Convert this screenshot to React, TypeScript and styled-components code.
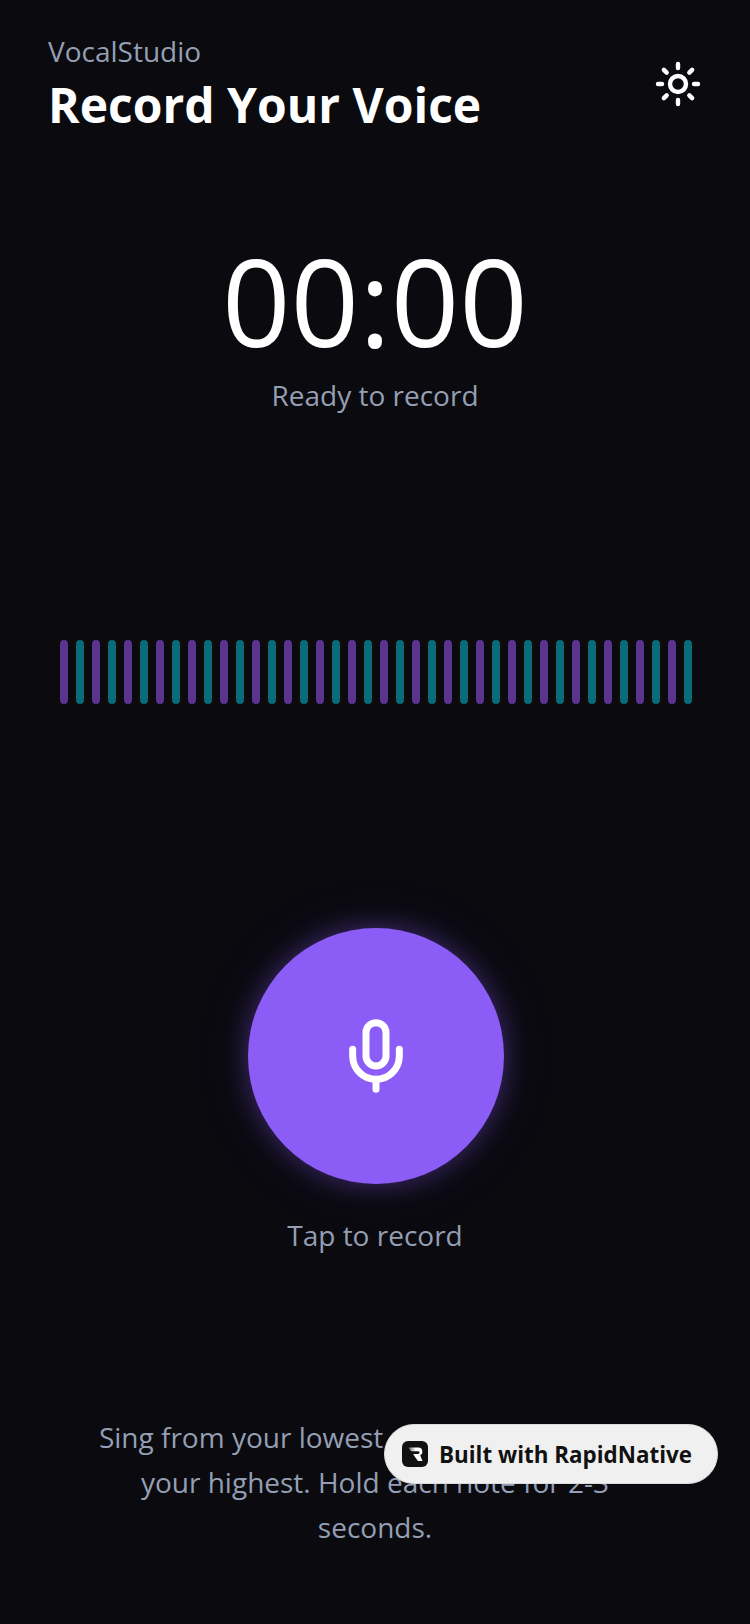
import React from "react";
import styled, { createGlobalStyle } from "styled-components";
import { Mic, Sun } from "lucide-react";

const Global = createGlobalStyle`
  html, body { margin: 0; padding: 0; background: #0a0a0f; }
  * { box-sizing: border-box; }
`;

const Screen = styled.div`
  position: relative;
  width: 750px;
  height: 1624px;
  overflow: hidden;
  background: #0a0a0f;
  font-family: "Open Sans", "Noto Sans", sans-serif;
  display: flex;
  flex-direction: column;
  align-items: center;
`;

const Header = styled.header`
  width: 100%;
  height: 136px;
  padding: 33px 48px 0;
  display: flex;
  justify-content: space-between;
`;

const Titles = styled.div`
  display: flex;
  flex-direction: column;
`;

const Brand = styled.div`
  font-size: 28px;
  line-height: 36px;
  color: #949fb4;
`;

const Title = styled.h1`
  margin: 2px 0 0;
  font-size: 48px;
  line-height: 68px;
  font-weight: 700;
  color: #ffffff;
`;

const ThemeButton = styled.button`
  margin: 27px 0 0;
  padding: 0;
  width: 48px;
  height: 48px;
  border: 0;
  background: none;
  color: #fff;
  display: flex;
  align-items: center;
  justify-content: center;
`;

const Timer = styled.div`
  margin-top: 105px;
  font-size: 120px;
  line-height: 120px;
  color: #fff;
  font-weight: 400;
`;

const Status = styled.div`
  margin-top: 14px;
  font-size: 28px;
  line-height: 40px;
  color: #949fb4;
`;

const Wave = styled.div`
  margin: 225px 0 0 2px;
  display: flex;
  gap: 8px;
  height: 64px;
`;

const Bar = styled.div<{ $alt: boolean }>`
  width: 8px;
  height: 64px;
  border-radius: 4px;
  background: ${(p) => (p.$alt ? "#0a6a7a" : "#5a3590")};
`;

const RecordButton = styled.button`
  margin: 224px 0 0 2px;
  width: 256px;
  height: 256px;
  border-radius: 50%;
  border: 0;
  padding: 0;
  background: #8b5cf6;
  color: #fff;
  box-shadow: 0 0 26px rgba(139, 92, 246, 0.38), 0 0 64px rgba(139, 92, 246, 0.1);
  display: flex;
  align-items: center;
  justify-content: center;
`;

const Hint = styled.div`
  margin-top: 31px;
  font-size: 28px;
  line-height: 40px;
  color: #949fb4;
`;

const Instructions = styled.p`
  margin: 160px 0 0;
  width: 562px;
  font-size: 28px;
  line-height: 45px;
  color: #949fb4;
  text-align: center;
`;

const Badge = styled.div`
  position: absolute;
  left: 384px;
  top: 1424px;
  width: 334px;
  height: 60px;
  border-radius: 30px;
  background: #f0f0f0;
  border: 1px solid #dcdcdc;
  display: flex;
  align-items: center;
  padding-left: 17px;
  gap: 11px;
  color: #111;
  font-size: 22.4px;
  font-weight: 700;
  white-space: nowrap;
`;

const Logo = styled.svg`
  width: 26px;
  height: 26px;
  flex: none;
`;

export default function App() {
  return (
    <Screen>
      <Global />
      <Header>
        <Titles>
          <Brand>VocalStudio</Brand>
          <Title>Record Your Voice</Title>
        </Titles>
        <ThemeButton aria-label="Theme">
          <Sun size={48} strokeWidth={2.2} />
        </ThemeButton>
      </Header>
      <Timer>00:00</Timer>
      <Status>Ready to record</Status>
      <Wave>
        {Array.from({ length: 40 }, (_, i) => (
          <Bar key={i} $alt={i % 2 === 1} />
        ))}
      </Wave>
      <RecordButton aria-label="Record">
        <Mic size={80} strokeWidth={2.1} />
      </RecordButton>
      <Hint>Tap to record</Hint>
      <Instructions>
        Sing from your lowest comfortable note to your highest. Hold each note for 2-3 seconds.
      </Instructions>
      <Badge>
        <Logo viewBox="0 0 26 26">
          <defs>
            <linearGradient id="rapidFade" x1="0" y1="0" x2="1" y2="0">
              <stop offset="0" stopColor="#fff" stopOpacity="0.35" />
              <stop offset="0.5" stopColor="#fff" />
            </linearGradient>
          </defs>
          <rect width="26" height="26" rx="6" fill="#111" />
          <path
            d="M6.5 6.5h10a4 4 0 0 1 1.6 7.6L20.5 20h-4.6l-5-7h5.2a1.3 1.3 0 0 0 0-2.8H9z"
            fill="url(#rapidFade)"
          />
        </Logo>
        Built with RapidNative
      </Badge>
    </Screen>
  );
}
